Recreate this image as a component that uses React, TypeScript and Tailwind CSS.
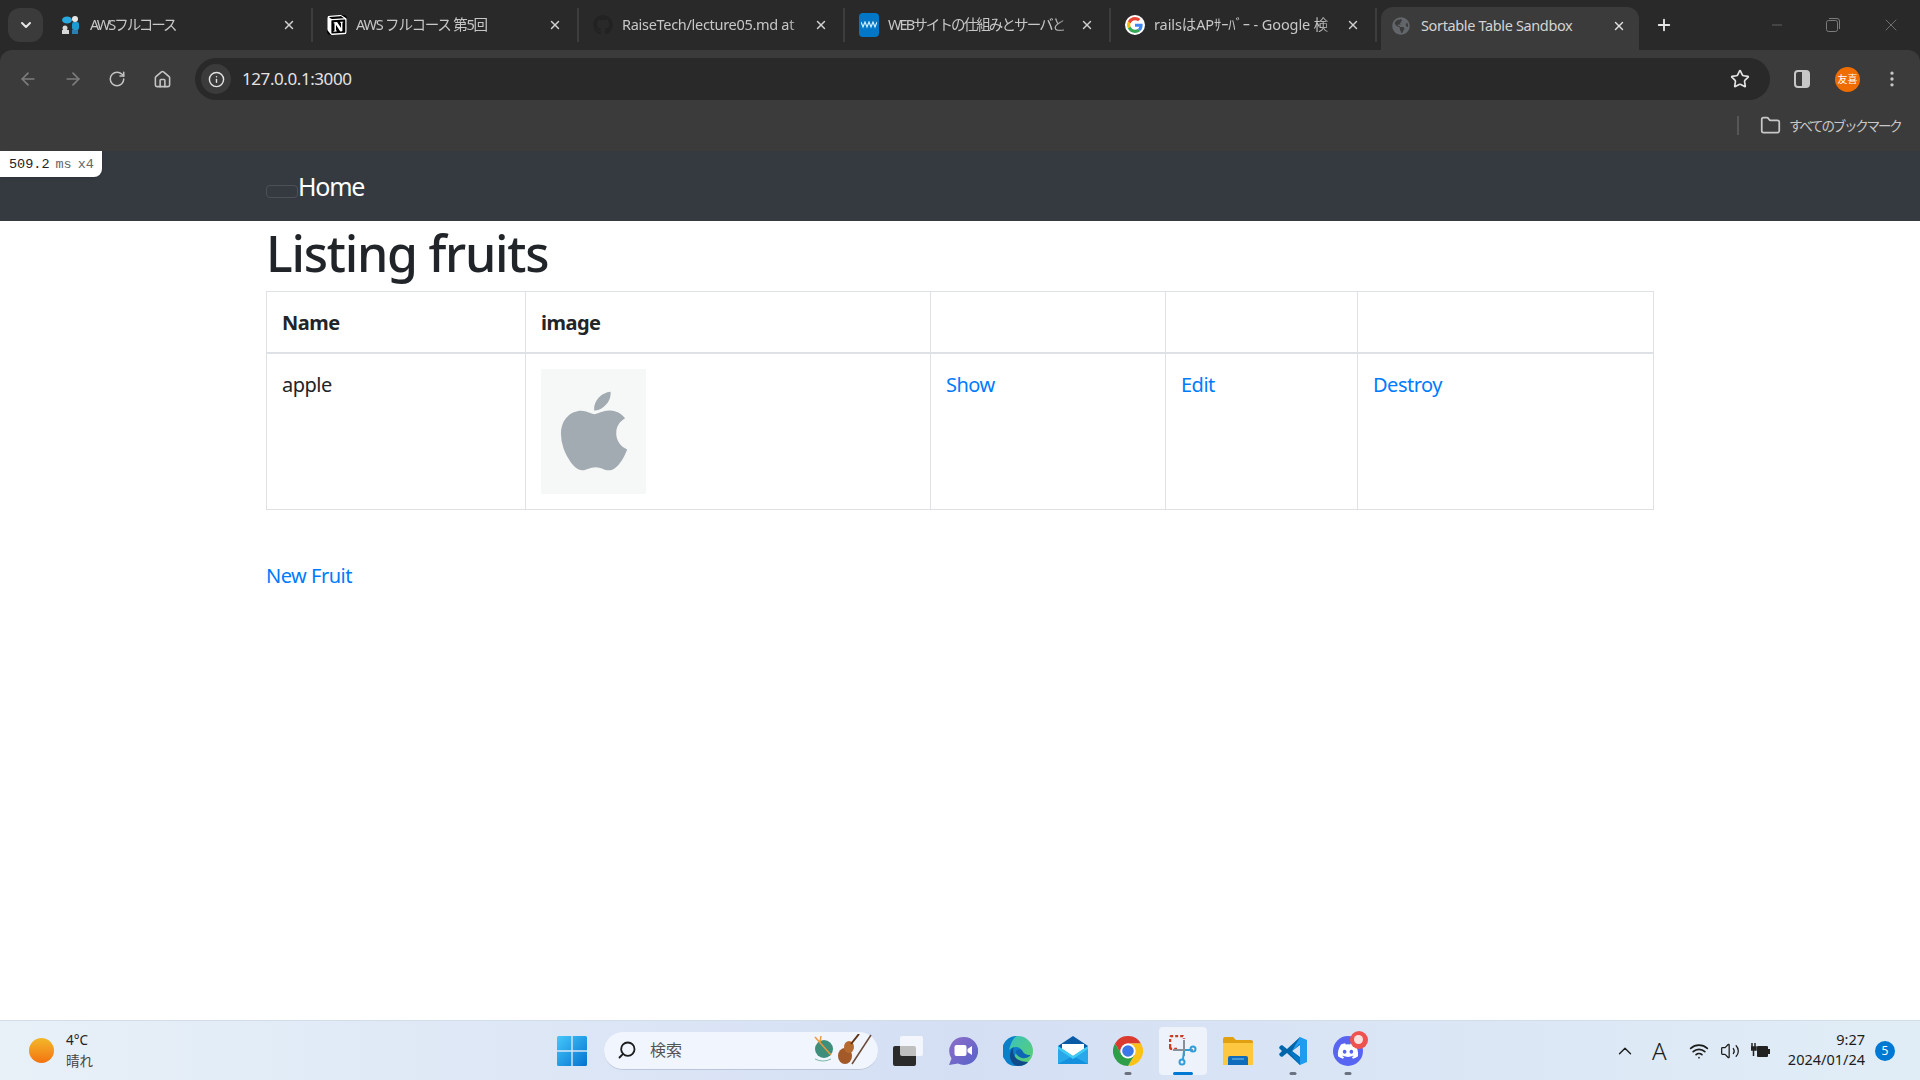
import { ArrowLeft, ArrowRight, ChevronDown, ChevronUp, Folder, Home, Info, Minus, MoreVertical, Plus, RotateCw, Search, Star, Volume2, Wifi, X } from "lucide-react";
import { FaApple, FaDiscord, FaGithub, FaGlobeAmericas } from "react-icons/fa";
import { SiNotion } from "react-icons/si";

const AwsIcon = () => (
  <svg width="20" height="20" viewBox="0 0 20 20">
    <ellipse cx="6" cy="5" rx="5" ry="3.5" fill="#29a9e0" />
    <circle cx="14" cy="4" r="3" fill="#e8e8e8" />
    <rect x="11" y="7" width="7" height="8" rx="2" fill="#1d9bd1" />
    <circle cx="4" cy="13" r="2.5" fill="#d8d8d8" />
    <rect x="1" y="15" width="7" height="4" fill="#d8d8d8" />
    <rect x="11" y="15" width="6" height="4" fill="#2a7fb0" />
  </svg>
);

const WmIcon = () => (
  <div className="w-5 h-6 bg-[#0277c8] rounded-sm flex items-center justify-center">
    <svg width="16" height="8" viewBox="0 0 16 8" fill="none" stroke="#cfeefc" strokeWidth="1.2">
      <path d="M0 1l2 5 2-5 2 5 2-5 2 5 2-5 2 5 2-5" />
    </svg>
  </div>
);

const GoogleIcon = () => (
  <div className="w-5 h-5 rounded-full bg-white flex items-center justify-center">
    <svg width="16" height="16" viewBox="0 0 48 48">
      <path fill="#EA4335" d="M24 9.5c3.5 0 6.700 1.200 9.200 3.600l6.900-6.900C35.900 2.400 30.500 0 24 0 14.600 0 6.500 5.400 2.600 13.200l8 6.200C12.500 13.700 17.800 9.500 24 9.500z" />
      <path fill="#4285F4" d="M46.900 24.500c0-1.600-.1-3.100-.4-4.500H24v9h12.900c-.6 3-2.200 5.500-4.800 7.200l7.700 6c4.500-4.200 7.100-10.300 7.100-17.700z" />
      <path fill="#FBBC05" d="M10.500 28.600c-.5-1.400-.8-3-.8-4.600s.3-3.100.8-4.600l-8-6.200C.9 16.500 0 20.100 0 24s.9 7.500 2.600 10.800l7.900-6.200z" />
      <path fill="#34A853" d="M24 48c6.500 0 11.900-2.100 15.900-5.800l-7.700-6c-2.200 1.500-5 2.300-8.200 2.300-6.200 0-11.500-4.200-13.400-9.900l-8 6.200C6.500 42.600 14.600 48 24 48z" />
    </svg>
  </div>
);

const tabs = [
  { title: "AWSフルコース", icon: <AwsIcon />, tracking: "tracking-[-2px]" },
  { title: "AWS フルコース 第5回", icon: <SiNotion className="text-white bg-black rounded-sm" size={20} />, tracking: "tracking-[-1.2px]" },
  { title: "RaiseTech/lecture05.md at", icon: <FaGithub className="text-[#222]" size={20} />, tracking: "tracking-[-0.3px]" },
  { title: "WEBサイトの仕組みとサーバと", icon: <WmIcon />, tracking: "tracking-[-1.9px]" },
  { title: "railsはAPｻｰﾊﾞｰ - Google 検", icon: <GoogleIcon />, tracking: "tracking-[-0.1px]" },
];

const TabStrip = () => (
  <div className="h-[50px] flex items-end">
    <div className="w-[47px] h-full flex items-center justify-center">
      <div className="w-[35px] h-[34px] ml-[4px] rounded-xl bg-[#3b3b3b] flex items-center justify-center">
        <ChevronDown size={16} strokeWidth={3} className="text-[#e6e6e6]" />
      </div>
    </div>
    {tabs.map((tab) => (
      <div key={tab.title} className="w-[266px] h-[34px] mb-[8px] flex items-center pl-[14px] border-r-2 border-[#3d3d3d]">
        <div className="w-5 flex justify-center shrink-0">{tab.icon}</div>
        <span className={`ml-[9px] w-[188px] whitespace-nowrap text-[14.5px] text-[#c7c7c7] [mask-image:linear-gradient(to_right,black_88%,transparent)] ${tab.tracking}`}>
          {tab.title}
        </span>
        <X size={14} strokeWidth={2.5} className="text-[#d0d0d0] ml-[4px]" />
      </div>
    ))}
    <div className="w-[258px] h-[43px] ml-[4px] pb-[6px] bg-[#3b3b3b] rounded-t-xl flex items-center pl-[11px]">
      <FaGlobeAmericas size={18} className="text-[#62666b]" />
      <span className="ml-[11px] w-[191px] text-[14.5px] tracking-tight text-[#d4d4d4]">Sortable Table Sandbox</span>
      <X size={14} strokeWidth={2.5} className="text-[#e0e0e0]" />
    </div>
    <div className="h-[50px] ml-[16px] flex items-center">
      <Plus size={18} strokeWidth={2.5} className="text-[#e6e6e6]" />
    </div>
    <div className="h-[50px] flex-1 flex items-center text-[#7c7c7c]">
      <Minus size={16} strokeWidth={1} className="ml-[96px]" />
      <svg width="14" height="14" viewBox="0 0 14 14" fill="none" stroke="currentColor" className="ml-[41px]">
        <rect x="0.5" y="2.5" width="11" height="11" rx="2" />
        <path d="M3 0.5h8a2.500 2.500 0 0 1 2.500 2.500v8" />
      </svg>
      <X size={20} strokeWidth={1} className="ml-[41px]" />
    </div>
  </div>
);

const Toolbar = () => (
  <div className="h-[50px] bg-[#3b3b3b] rounded-t-xl flex items-end">
    <div className="w-[195px] h-[42px] flex items-center text-[#7d7d7d]">
      <ArrowLeft size={20} className="ml-[18px]" />
      <ArrowRight size={20} className="ml-[25px]" />
      <RotateCw size={18} className="ml-[25px] text-[#c4c4c4]" />
      <Home size={19} className="ml-[27px] text-[#c4c4c4]" />
    </div>
    <div className="w-[1575px] h-[42px] rounded-full bg-[#292929] flex items-center pl-[6px]">
      <div className="w-[30px] h-[30px] rounded-full bg-[#3b3b3b] flex items-center justify-center">
        <Info size={17} className="text-[#e3e3e3]" />
      </div>
      <span className="ml-[11px] text-[17px] tracking-tight text-[#e3e3e3]">127.0.0.1:3000</span>
      <Star size={20} strokeWidth={2} className="ml-auto mr-[20px] text-[#e3e3e3]" />
    </div>
    <div className="flex-1 h-[42px] flex items-center text-[#c7c7c7]">
      <div className="ml-[24px] w-[16px] h-[18px] rounded-sm border-2 border-[#c7c7c7] flex justify-end">
        <div className="w-[6px] bg-[#c7c7c7]" />
      </div>
      <div className="ml-[25px] w-[25px] h-[25px] rounded-full bg-[#ef6c00] flex items-center justify-center text-[10px] text-white">友喜</div>
      <MoreVertical size={20} className="ml-[22px]" />
    </div>
  </div>
);

const BookmarkBar = () => (
  <div className="h-[51px] bg-[#3b3b3b] flex items-center justify-end pr-[17px]">
    <div className="w-[2px] h-[19px] bg-[#565656]" />
    <Folder size={21} className="ml-[21px] text-[#c7c7c7]" />
    <span className="ml-[8px] w-[114px] whitespace-nowrap pt-[1px] text-[13.5px] tracking-[-2.2px] text-[#c7c7c7]">すべてのブックマーク</span>
  </div>
);

const Navbar = () => (
  <nav className="h-[70px] bg-[#343a40]">
    <div className="w-[1388px] mx-auto flex h-full items-center">
      <div className="w-[32px] h-[13px] mt-[10px] rounded border border-[#4b5157]" />
      <span className="mt-[2px] text-[25px] tracking-tighter text-white">Home</span>
    </div>
  </nav>
);

const FruitTable = () => (
  <table className="w-[1387px] table-fixed border-collapse text-[20px] leading-[30px] tracking-tight text-[#212529]">
    <colgroup>
      <col className="w-[259px]" />
      <col className="w-[405px]" />
      <col className="w-[235px]" />
      <col className="w-[192px]" />
      <col className="w-[296px]" />
    </colgroup>
    <thead>
      <tr className="h-[61px]">
        <th className="border border-b-2 border-[#dee2e6] px-[15px] pt-[2px] text-left font-bold">Name</th>
        <th className="border border-b-2 border-[#dee2e6] px-[15px] pt-[2px] text-left font-bold">image</th>
        <th className="border border-b-2 border-[#dee2e6]" />
        <th className="border border-b-2 border-[#dee2e6]" />
        <th className="border border-b-2 border-[#dee2e6]" />
      </tr>
    </thead>
    <tbody>
      <tr className="h-[156px]">
        <td className="border border-[#dee2e6] px-[15px] pt-[16px] pb-[14px] align-top">apple</td>
        <td className="border border-[#dee2e6] p-[15px] align-top">
          <div className="w-[105px] h-[125px] bg-[#f6f7f7] flex items-center justify-center">
            <FaApple size={90} className="text-[#a1abb1]" />
          </div>
        </td>
        <td className="border border-[#dee2e6] px-[15px] pt-[16px] pb-[14px] align-top text-[#007bff]">Show</td>
        <td className="border border-[#dee2e6] px-[15px] pt-[16px] pb-[14px] align-top text-[#007bff]">Edit</td>
        <td className="border border-[#dee2e6] px-[15px] pt-[16px] pb-[14px] align-top text-[#007bff]">Destroy</td>
      </tr>
    </tbody>
  </table>
);

const WinLogo = () => (
  <svg width="30" height="30" viewBox="0 0 30 30">
    <defs>
      <linearGradient id="win" x1="0" y1="0" x2="1" y2="1">
        <stop offset="0" stopColor="#45c8fb" />
        <stop offset="1" stopColor="#0572d0" />
      </linearGradient>
    </defs>
    <path fill="url(#win)" d="M0 1.500A1.500 1.500 0 0 1 1.500 0H14.300V14.300H0zM15.700 0H28.500A1.500 1.500 0 0 1 30 1.500V14.300H15.700zM0 15.700H14.300V30H1.500A1.500 1.500 0 0 1 0 28.500zM15.700 15.700H30V28.500A1.500 1.500 0 0 1 28.500 30H15.700z" />
  </svg>
);

const SearchArt = () => (
  <svg width="60" height="32" viewBox="0 0 60 32">
    <circle cx="12" cy="15" r="9" fill="#3d8f7b" />
    <path d="M3 3l16 18M9 2l-1 6" stroke="#e89a3c" strokeWidth="1.500" />
    <path d="M3 25q8 4 16 0" stroke="#7cb8a8" strokeWidth="1" fill="none" />
    <ellipse cx="33" cy="22" rx="7" ry="8" fill="#a35a28" />
    <ellipse cx="37" cy="13" rx="5" ry="6" fill="#b56a30" />
    <path d="M39 10l8-10" stroke="#5b3318" strokeWidth="2" />
    <path d="M40 30L59 1" stroke="#6b4a3a" strokeWidth="1.500" />
  </svg>
);

const TaskView = () => (
  <div className="relative w-[30px] h-[30px]">
    <div className="absolute left-0 bottom-0 w-[23px] h-[20px] rounded-[2px] bg-[#2b2b2b]" />
    <div className="absolute right-0 top-0 w-[23px] h-[20px] rounded-[2px] bg-white/70" />
  </div>
);

const ChatIcon = () => (
  <svg width="30" height="30" viewBox="0 0 30 30">
    <defs>
      <linearGradient id="chat" x1="0" y1="0" x2="1" y2="1">
        <stop offset="0" stopColor="#8f6ec8" />
        <stop offset="1" stopColor="#5662c9" />
      </linearGradient>
    </defs>
    <path fill="url(#chat)" d="M16 1a14 14 0 1 1-6 26.600L1 29l2.500-6.500A14 14 0 0 1 16 1z" />
    <rect x="6.500" y="9" width="12" height="11" rx="2" fill="#fff" />
    <path d="M19.500 13l4.500-3v9l-4.500-3z" fill="#fff" />
  </svg>
);

const EdgeIcon = () => (
  <svg width="30" height="30" viewBox="0 0 30 30">
    <defs>
      <linearGradient id="edge" x1="0" y1="0" x2="1" y2="1">
        <stop offset="0" stopColor="#35c1c8" />
        <stop offset="1" stopColor="#5fd068" />
      </linearGradient>
    </defs>
    <circle cx="15" cy="15" r="15" fill="url(#edge)" />
    <path fill="#0c7fcb" d="M15 0A15 15 0 0 0 2 24c3 6 9 6 13 6 4 0 8-1.500 10-4-7 2-13-1-13-6 0-3 3-6 7-5-2-5-9-5-13-1C8 6 11 0 15 0z" />
    <path fill="#114a8b" d="M11 11c-2 3-1 9 3 12 3 2 7 3 11 3-3 3-7 4-10 4-3 0-8-4-8-10 0-4 1-7 4-9z" />
    <path fill="#0f66b5" d="M27 19c1 1-3 4-8 3-4-1-7-4-6-7 1-2 4-2 6-1 1 3 4 5 8 5z" />
  </svg>
);

const MailIcon = () => (
  <svg width="30" height="30" viewBox="0 0 30 30">
    <path d="M0 10L15 0l15 10v5H0z" fill="#0a5aa6" />
    <path d="M4 8h22v12H4z" fill="#fff" />
    <path d="M0 10l15 10L30 10v18H0z" fill="#28a8ea" />
    <path d="M0 28l15-8 15 8z" fill="#1490df" />
    <path d="M0 10l15 10 15-10v3L15 23 0 13z" fill="#3ccbf4" />
  </svg>
);

const ChromeIcon = () => (
  <svg width="30" height="30" viewBox="0 0 30 30">
    <path fill="#db3a2e" d="M15 7.500H28A15 15 0 0 0 2 7.500L8.500 18.800A7.500 7.500 0 0 1 15 7.500z" />
    <path fill="#fbc116" d="M15 7.500H28A15 15 0 0 1 15 30L21.500 18.800A7.500 7.500 0 0 0 15 7.500z" />
    <path fill="#2f9e48" d="M2 7.500A15 15 0 0 0 15 30L21.500 18.800H8.500z" />
    <circle cx="15" cy="15" r="7.500" fill="#fff" />
    <circle cx="15" cy="15" r="5.800" fill="#3b78e7" />
  </svg>
);

const SnipIcon = () => (
  <svg width="28" height="32" viewBox="0 0 28 32" fill="none">
    <path d="M1 12V3a2 2 0 0 1 2-2h10a2 2 0 0 1 2 2v1" stroke="#cf3a22" strokeWidth="2.500" strokeDasharray="3 2" />
    <path d="M1 12a2 2 0 0 0 2 2h5" stroke="#cf3a22" strokeWidth="2.500" strokeDasharray="3 2" />
    <path d="M4 15h12l8 0M15 5v16" stroke="#8a8f96" strokeWidth="2" />
    <circle cx="24" cy="14" r="2.500" stroke="#2f9fdc" strokeWidth="2" />
    <circle cx="13" cy="27" r="2.500" stroke="#2f9fdc" strokeWidth="2" />
    <path d="M15 16l-1 8M16 15h5" stroke="#2f9fdc" strokeWidth="2" />
  </svg>
);

const FolderIcon = () => (
  <svg width="30" height="28" viewBox="0 0 30 28">
    <path d="M0 2a2 2 0 0 1 2-2h8l3 3h15a2 2 0 0 1 2 2v4H0z" fill="#e0a00f" />
    <path d="M0 6h30v22H0z" fill="#fdc83f" />
    <path d="M5 28v-7a2 2 0 0 1 2-2h16a2 2 0 0 1 2 2v7z" fill="#0f6cbd" />
    <path d="M9 22h12" stroke="#7cc4f0" strokeWidth="1" />
  </svg>
);

const CodeIcon = () => (
  <svg width="30" height="30" viewBox="0 0 30 30">
    <path fill="#0065a9" d="M2 10l2-1 5 4 13-12v8l-8 6 8 6v8L9 17l-5 4-2-1-1-2 3-3-3-3z" />
    <path fill="#1f9cf0" d="M22 1l7 3v22l-7 3V8l-8 7z" />
    <path fill="#0078c8" d="M22 29v-7l-8-7-2 2z" />
  </svg>
);

const DiscordIcon = () => (
  <div className="relative w-[30px] h-[30px] rounded-full bg-[#5865f2] flex items-center justify-center">
    <FaDiscord size={22} className="text-white" />
    <div className="absolute -top-[5px] -right-[5px] w-[18px] h-[18px] rounded-full bg-[#ef5350] flex items-center justify-center">
      <div className="w-[9px] h-[9px] rounded-full bg-[#f7e4e0]" />
    </div>
  </div>
);

const taskbarApps = [
  { key: "task", icon: <TaskView />, dot: "" },
  { key: "chat", icon: <ChatIcon />, dot: "" },
  { key: "edge", icon: <EdgeIcon />, dot: "" },
  { key: "mail", icon: <MailIcon />, dot: "" },
  { key: "chrome", icon: <ChromeIcon />, dot: "w-[7px] bg-[#6b7280]" },
  { key: "snip", icon: <SnipIcon />, dot: "w-[20px] bg-[#0078d4]", active: true },
  { key: "folder", icon: <FolderIcon />, dot: "" },
  { key: "code", icon: <CodeIcon />, dot: "w-[7px] bg-[#6b7280]" },
  { key: "discord", icon: <DiscordIcon />, dot: "w-[7px] bg-[#6b7280]" },
];

const Taskbar = () => (
  <div className="h-[60px] shrink-0 border-t border-[#d3dcea] bg-gradient-to-r from-[#e8f1f8] via-[#d4dff4] to-[#e1edf6] flex items-center">
    <div className="w-[29px]" />
    <div className="w-[25px] h-[25px] rounded-full bg-gradient-to-b from-[#f2b72a] to-[#f2730f]" />
    <div className="ml-[12px] w-[491px] text-[13.5px] leading-[21px] text-[#222]">
      <div>4°C</div>
      <div className="text-[#444]">晴れ</div>
    </div>
    <WinLogo />
    <div className="ml-[17px] w-[274px] h-[38px] rounded-full bg-[#f1f5fd] border-b border-[#bcc6da] flex items-center">
      <Search size={20} strokeWidth={2.2} className="ml-[13px] text-[#1c1c1c] -scale-x-100" />
      <span className="ml-[13px] text-[16px] text-[#555]">検索</span>
      <div className="ml-auto mr-[6px]"><SearchArt /></div>
    </div>
    <div className="ml-[2px] flex">
      {taskbarApps.map((app) => (
        <div key={app.key} className="relative w-[55px] h-[48px] flex items-center justify-center">
          {app.active && <div className="absolute inset-y-0 left-[4px] w-[48px] rounded bg-[#eef2fb]" />}
          <div className="relative">{app.icon}</div>
          {app.dot && <div className={`absolute bottom-[0px] left-1/2 -translate-x-1/2 h-[3px] rounded-full ${app.dot}`} />}
        </div>
      ))}
    </div>
    <div className="flex-1 flex items-center text-[#1c1c1c]">
      <ChevronUp size={22} strokeWidth={1.5} className="ml-[239px]" />
      <span className="ml-[16px] w-[14px] text-[24px] font-light leading-none">A</span>
      <Wifi size={20} className="ml-[23px]" />
      <Volume2 size={20} strokeWidth={1.5} className="ml-[11px]" />
      <svg width="20" height="16" viewBox="0 0 20 16" className="ml-[11px]">
        <rect x="6" y="3" width="11" height="11" rx="1" fill="#222" />
        <rect x="17" y="6" width="2" height="5" fill="#222" />
        <path d="M1 0v4M4 0v4M0 4h5v3H0zM2.500 7v6" stroke="#222" strokeWidth="1.500" fill="#222" />
      </svg>
      <div className="ml-[12px] -mt-[3px] w-[82px] text-right text-[14.5px] leading-[20px] whitespace-nowrap">
        <div>9:27</div>
        <div>2024/01/24</div>
      </div>
      <div className="ml-[10px] w-[20px] h-[20px] rounded-full bg-[#0078d4] text-white text-[12px] flex items-center justify-center">5</div>
    </div>
  </div>
);

export default function App() {
  return (
    <div className="relative w-full h-screen flex flex-col overflow-hidden bg-white font-['Noto_Sans','Noto_Sans_CJK_JP',sans-serif]">
      <div className="bg-[#292929]">
        <TabStrip />
        <Toolbar />
      </div>
      <BookmarkBar />
      <Navbar />
      {/* Frame-time badge over the page */}
      <div className="absolute left-0 top-[151px] w-[102px] h-[26px] rounded-br-lg bg-white shadow flex items-center pl-[9px] pt-[2px] font-['Liberation_Mono',monospace] text-[13.5px] text-[#222] whitespace-nowrap">
        509.2<span className="ml-[6px] text-[#666]">ms</span><span className="ml-[6px] text-[#666]">x4</span>
      </div>
      <main className="flex-1 w-[1388px] mx-auto">
        <h1 className="pt-[2px] mb-[8px] text-[50px] leading-[60px] font-medium tracking-tight text-[#212529]">Listing fruits</h1>
        <FruitTable />
        <p className="mt-[51px] text-[20px] leading-[30px] tracking-tight text-[#007bff]">New Fruit</p>
      </main>
      <Taskbar />
    </div>
  );
}
